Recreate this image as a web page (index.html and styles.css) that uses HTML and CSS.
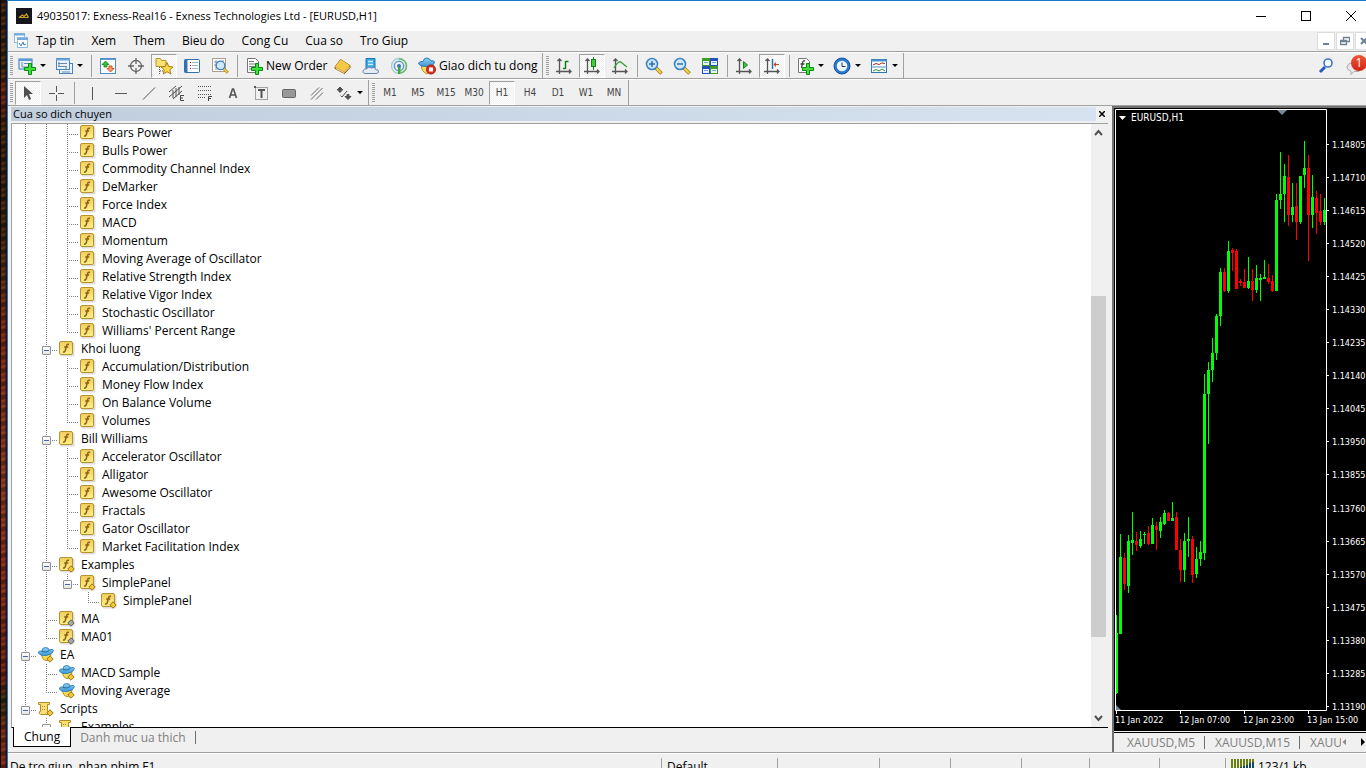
FILE: index.html
```html
<!DOCTYPE html>
<html lang="vi">
<head>
<meta charset="utf-8">
<title>49035017: Exness-Real16 - Exness Technologies Ltd - [EURUSD,H1]</title>
<link rel="stylesheet" href="styles.css">
</head>
<body>
<svg class="defs" aria-hidden="true">
  <defs>
    <linearGradient id="gold" x1="0" y1="0" x2="0" y2="1"><stop offset="0" stop-color="#f0cc5c"/><stop offset="1" stop-color="#fff08a"/></linearGradient>
    <linearGradient id="blue" x1="0" y1="0" x2="0" y2="1"><stop offset="0" stop-color="#8fd0f2"/><stop offset="1" stop-color="#3f96d4"/></linearGradient>
    <symbol id="plus" viewBox="0 0 12 12"><path d="M4.500.5h3v4h4v3h-4v4h-3v-4h-4v-3h4z" fill="#3fe03a" stroke="#0d8a12"/></symbol>
    <symbol id="diamond" viewBox="0 0 8 8"><path d="M4 .8 7.200 4 4 7.200.8 4z"/></symbol>
    <symbol id="fn" viewBox="0 0 16 16">
      <rect x="1.500" y="1.500" width="14" height="14" rx="1.500" fill="#ddd"/>
      <rect x=".5" y=".5" width="13" height="13" rx="1.500" fill="url(#gold)" stroke="#b8922c"/>
      <path d="M10 3.500Q8 2.500 7.500 5L6.300 9.500Q5.800 11.500 4 10.800M5.200 6h4" fill="none" stroke="#8a6414" stroke-width="1.500"/>
    </symbol>
    <symbol id="fny" viewBox="0 0 16 16"><use href="#fn" width="16" height="16"/><use href="#diamond" x="8" y="8" width="8" height="8" fill="#f1c638" stroke="#9a7413"/></symbol>
    <symbol id="fng" viewBox="0 0 16 16"><use href="#fn" width="16" height="16"/><use href="#diamond" x="8" y="8" width="8" height="8" fill="#a8a8a8" stroke="#606060"/></symbol>
    <symbol id="ea" viewBox="0 0 16 16">
      <path d="M3.500 7Q4 13 8 13.500T13 7z" fill="#f7dc5c" stroke="#b98d1c"/>
      <path d="M.5 6Q0 3.500 4 4Q4 .5 7.500.5T11 3Q15 1.500 15.500 3.500Q15 7 8.500 8.500Q2 9 .5 6z" fill="url(#blue)" stroke="#1f77ae" stroke-width=".8"/>
      <path d="M4 4.500Q8 6 11.500 3.500" fill="none" stroke="#1b6b9f"/>
      <use href="#diamond" x="8" y="8" width="8" height="8" fill="#f1c638" stroke="#9a7413"/>
    </symbol>
    <symbol id="script" viewBox="0 0 16 16">
      <path d="M.5 1.500h11v2h-2v7h2v3H2.500Q.5 13 1.500 10.500h1v-7h-2z" fill="#f8df76" stroke="#b18b28"/>
      <path d="M4 5.500h4M4 8.500h4" stroke="#b18b28" stroke-dasharray="1 1"/>
      <use href="#diamond" x="8" y="8" width="8" height="8" fill="#f1c638" stroke="#9a7413"/>
    </symbol>
    <symbol id="axes" viewBox="0 0 18 18"><path d="M4.500 2v15M1 14.500h15M2.500 4l2-2 2 2M14 12.500l2 2-2 2" fill="none" stroke="#555" stroke-width="1.300"/></symbol>
    <symbol id="lens" viewBox="0 0 18 18"><path d="M11 11l5.500 5.500" stroke="#a3780e" stroke-width="3.500"/><path d="M11 11l5 5" stroke="#f6d64b" stroke-width="2"/><circle cx="7" cy="7" r="5.500" fill="#cfe9fb" stroke="#3f83c3" stroke-width="1.600"/></symbol>
  </defs>
</svg>

<div class="desktop">
<div class="wallpaper"></div>
<main class="window">
  <header class="titlebar">
    <svg class="appicon" viewBox="0 0 16 16"><rect width="16" height="16" fill="#15171c"/><path d="M3 9.500 6.500 7 8 8.500 10.500 6l2 3.500M3 9.500h9.500" fill="none" stroke="#c9a21f" stroke-width="1.200"/></svg>
    <h1>49035017: Exness-Real16 - Exness Technologies Ltd - [EURUSD,H1]</h1>
    <div class="winbtns">
      <button aria-label="Minimize"><svg viewBox="0 0 10 10"><path d="M0 5.500h10" stroke="#000"/></svg></button>
      <button aria-label="Maximize"><svg viewBox="0 0 10 10"><rect x=".5" y=".5" width="9" height="9" fill="none" stroke="#000"/></svg></button>
      <button aria-label="Close"><svg viewBox="0 0 10 10"><path d="M0 0l10 10M10 0 0 10" stroke="#000"/></svg></button>
    </div>
  </header>

  <nav class="menubar">
    <svg class="menuicon" viewBox="0 0 16 16"><g fill="#fff" stroke="#8dbbe6"><rect x="1.500" y=".5" width="10" height="9"/><rect x="4.500" y="4.500" width="10" height="10"/></g><path d="M1 1.500h11M4 6h11" stroke="#74abdf" stroke-width="2"/><path d="M6 10l2 3 2-4 1 3 2-1" fill="none" stroke="#3b7fc0"/></svg>
    <button>Tap tin</button><button>Xem</button><button>Them</button><button>Bieu do</button><button>Cong Cu</button><button>Cua so</button><button>Tro Giup</button>
    <div class="mdi">
      <button aria-label="Minimize chart"><svg viewBox="0 0 10 10"><path d="M2 8h6" stroke="#6f7f94" stroke-width="2"/></svg></button>
      <button aria-label="Restore chart"><svg viewBox="0 0 10 10"><path d="M3.500 4V1.500h6v4H7M.5 4.500h6v4h-6zM.5 5.500h6" fill="none" stroke="#6f7f94" stroke-width="1.300"/></svg></button>
      <button aria-label="Close chart"><svg viewBox="0 0 10 10"><path d="M2 2l6 6M8 2 2 8" stroke="#6f7f94" stroke-width="2"/></svg></button>
    </div>
  </nav>

  <div class="toolbar">
    <div class="group">
      <button class="drop" aria-label="New chart"><svg viewBox="0 0 18 18"><rect x="1" y="2" width="13" height="10" fill="#e9f3fd" stroke="#2f76b8"/><path d="M1 3h13" stroke="#5b9bd5" stroke-width="2"/><path d="M4 5v5h7M6 6.500h5" fill="none" stroke="#6c8aa8"/><use href="#plus" x="6" y="6" width="12" height="12"/></svg></button>
      <button class="drop" aria-label="Profiles"><svg viewBox="0 0 18 18"><g fill="#eaf3fc" stroke="#4b82b8"><rect x="4.500" y="6.500" width="13" height="10"/><rect x="1.500" y="1.500" width="13" height="11"/></g><path d="M1 2.500h14" stroke="#6ba6dc" stroke-width="2"/><path d="M4 5v5M3 6.500h9M3 9.500h9M11 9v3M7 15h8" stroke="#6c8aa8"/></svg></button>
      <i class="sep"></i>
      <button aria-label="Market watch"><svg viewBox="0 0 18 18"><rect x="1.500" y="1.500" width="15" height="15" fill="#fff" stroke="#4d8fca"/><path d="M2 2.500h14" stroke="#5b9bd5"/><path d="M6.500 4 10 7.500H8V10H5V7.500H3z" fill="#36c234" stroke="#11820f" stroke-width=".8"/><path d="M11.500 15 8 11.500h2V9h3v2.500h2z" fill="#ff9b6d" stroke="#c8350d" stroke-width=".8"/></svg></button>
      <button aria-label="Data window"><svg viewBox="0 0 18 18"><g fill="none" stroke="#666" stroke-width="1.300"><circle cx="9" cy="9" r="5.500"/><path d="M9 1v6M9 11v6M1 9h6M11 9h6"/></g></svg></button>
      <button class="on" aria-label="Navigator"><svg viewBox="0 0 18 18"><path d="M1 2V9.500h10V3.500H6.500L5.500 1.500H1z" fill="#f8e276" stroke="#b6942a"/><path d="M4.500 10v7M5 14h4" stroke="#555" stroke-dasharray="1 1"/><path d="M12 5.500 13.700 9.500 18 10l-3.200 2.700 1 4.300L12 14.700 8.300 17l1-4.300L6 10l4.300-.5z" fill="#ffdc46" stroke="#a97c12"/></svg></button>
      <button aria-label="Terminal"><svg viewBox="0 0 18 18"><rect x="1.500" y="2.500" width="15" height="13" rx="1" fill="#fff" stroke="#2c6fb2"/><path d="M3 2.500v13" stroke="#2f72b5" stroke-width="3"/><path d="M7 5.500h1M7 8.500h1M7 11.500h1" stroke="#c00"/><path d="M9 5.500h6M9 8.500h6M9 11.500h6" stroke="#9cb5cc"/></svg></button>
      <button aria-label="Strategy tester"><svg viewBox="0 0 18 18"><rect x="1.500" y="1.500" width="13" height="13" fill="#fff" stroke="#a9a08e"/><path d="M3 5h9M3 8h9M5 3v10M12 3v3" stroke="#8a9aaa"/><use href="#lens" x="4" y="3" width="14" height="14"/></svg></button>
      <i class="sep"></i>
      <button class="labelled order"><svg viewBox="0 0 18 18"><path d="M1.500 1.500h8l3 3v11h-11z" fill="#fff" stroke="#777"/><path d="M3 4.500h5M3 7h7M3 9.500h7M3 12h3" stroke="#777"/><use href="#plus" x="5" y="6" width="12" height="12"/></svg><span>New Order</span></button>
      <button aria-label="MetaEditor"><svg viewBox="0 0 18 18"><path d="M1 10 6.500 2.500 16 8.500v2L10.500 16.500 1 11.500z" fill="#b27911" stroke="#8c5c09"/><path d="M1 10 6.500 2.500 16 8.500 10 14.500z" fill="#f4c948"/><path d="M2 11.500l8 4L15.500 10" fill="none" stroke="#fff0b0"/></svg></button>
      <button aria-label="Virtual hosting"><svg viewBox="0 0 18 18"><path d="M4 1.500h9v10H4z" fill="#37a5e8" stroke="#1b76b8"/><path d="M6 4.500h5M6 7.500h5" stroke="#d5f1ff" stroke-width="1.500"/><path d="M3 16.500Q0 16 1.500 13Q2.500 11.500 4.500 12Q6 8.500 9.500 11Q13 9.500 13.500 12.500Q17 12.500 16.500 15Q16 16.500 14 16.500z" fill="#e3ecf6" stroke="#6785a6"/></svg></button>
      <button aria-label="Signals"><svg viewBox="0 0 18 18"><g fill="none"><circle cx="9" cy="9" r="7.500" stroke="#a6cbd9" stroke-width="1.300"/><circle cx="9" cy="9" r="4.700" stroke="#5d9fca" stroke-width="1.500"/><path d="M9 2a7 7 0 0 1 1 14V9" stroke="#6dbb6b" stroke-width="1.500"/></g><circle cx="9" cy="9" r="2" fill="#3975bd"/><path d="M9 10v7" stroke="#3ea73b" stroke-width="2"/></svg></button>
      <button class="labelled auto"><svg viewBox="0 0 18 18"><path d="M3.500 9Q3 14 9 17L16 8z" fill="#f9dc5b" stroke="#b98d1c"/><path d="M.5 6Q2 4 5 4.500Q6 .5 9 1T13 4Q16 3 16.500 5Q16 9 9 9.500Q1 9.500.5 6z" fill="url(#blue)" stroke="#2b7fb3"/><circle cx="13" cy="12.500" r="4.500" fill="#e0301e" stroke="#a8180c"/><rect x="11" y="10.500" width="4" height="4" fill="#fff"/></svg><span>Giao dich tu dong</span></button>
    </div>
    <div class="group">
      <button aria-label="Bar chart"><svg viewBox="0 0 18 18"><use href="#axes" width="18" height="18"/><path d="M10.500 4v8M10.500 4.500h3M8 11.500h2.500" fill="none" stroke="#15801c" stroke-width="1.500"/></svg></button>
      <button class="on" aria-label="Candlesticks"><svg viewBox="0 0 18 18"><use href="#axes" width="18" height="18"/><path d="M10.500 0v13" stroke="#15801c"/><rect x="8.500" y="2.500" width="4" height="7" fill="#3bd33d" stroke="#15801c"/></svg></button>
      <button aria-label="Line chart"><svg viewBox="0 0 18 18"><use href="#axes" width="18" height="18"/><path d="M3 11Q8 2 11 6L16 10" fill="none" stroke="#34a038" stroke-width="1.300"/></svg></button>
      <i class="sep"></i>
      <button aria-label="Zoom in"><svg viewBox="0 0 18 18"><use href="#lens" width="18" height="18"/><path d="M4 7h6M7 4v6" stroke="#2e6fb3" stroke-width="1.500"/></svg></button>
      <button aria-label="Zoom out"><svg viewBox="0 0 18 18"><use href="#lens" width="18" height="18"/><path d="M4 7h6" stroke="#2e6fb3" stroke-width="1.500"/></svg></button>
      <button aria-label="Tile windows"><svg viewBox="0 0 18 18"><path d="M1 1h8v8H1z" fill="#3f9b22"/><path d="M9 1h8v8H9z" fill="#2351b9"/><path d="M1 9h8v8H1z" fill="#2351b9"/><path d="M9 9h8v8H9z" fill="#3f9b22"/><path d="M2 4h6v4H2zM10 4h6v4h-6zM2 12h6v4H2zM10 12h6v4h-6z" fill="#e8f2ff"/><path d="M3 5.500h4M11 5.500h4M3 13.500h4M11 13.500h4" stroke="#7ba3d8"/></svg></button>
      <i class="sep"></i>
      <button aria-label="Auto scroll"><svg viewBox="0 0 18 18"><use href="#axes" width="18" height="18"/><path d="M8.500 4.500v7l4-3.500z" fill="#37c637" stroke="#15801c"/></svg></button>
      <button class="on" aria-label="Chart shift"><svg viewBox="0 0 18 18"><use href="#axes" width="18" height="18"/><path d="M9.500 2v10" stroke="#2b6da8" stroke-width="1.500"/><path d="M10.500 7.500 13 5V7h3v1h-3v2z" fill="#c8441b"/></svg></button>
      <i class="sep"></i>
      <button class="drop" aria-label="Indicators"><svg viewBox="0 0 18 18"><path d="M2.500 1.500h8l3 3v11h-11z" fill="#fff" stroke="#777"/><path d="M9 4Q7 3 6.500 6L5.500 11M4.500 7h4" fill="none" stroke="#444" stroke-width="1.300"/><use href="#plus" x="6" y="6" width="12" height="12"/></svg></button>
      <button class="drop" aria-label="Periods"><svg viewBox="0 0 18 18"><circle cx="9" cy="9" r="8" fill="#2879d0" stroke="#1153a0"/><circle cx="9" cy="9" r="5.300" fill="#e9f5ff"/><path d="M9 5.500V9.500h3.500" fill="none" stroke="#333"/></svg></button>
      <button class="drop" aria-label="Templates"><svg viewBox="0 0 18 18"><rect x="1.500" y="2.500" width="15" height="13" fill="#fff" stroke="#2f76b8"/><path d="M1 3.500h16" stroke="#4b90d0" stroke-width="2"/><path d="M1 10h16" stroke="#4b90d0"/><path d="M3 8l3-1.500 3 1 3-1.500 3 .5" fill="none" stroke="#a02c16"/><path d="M3 14l3-1.500 3 1.500 3-2 3 2" fill="none" stroke="#2a9430"/></svg></button>
    </div>
    <div class="tools">
      <button aria-label="Search"><svg viewBox="0 0 18 18"><path d="M3 15l5-5" stroke="#2559bd" stroke-width="3"/><circle cx="11" cy="6" r="4" fill="#fff" stroke="#3b75d4" stroke-width="1.600"/></svg></button>
      <button class="chat" aria-label="Messages"><svg viewBox="0 0 18 18"><path d="M7 5.500h7v9H9l-3 3v-3Q2 13 2 10T7 5.500z" fill="#e8e8ec" stroke="#aaa"/></svg><b class="badge">1</b></button>
    </div>
  </div>

  <div class="toolbar">
    <div class="group">
      <button class="on" aria-label="Cursor"><svg viewBox="0 0 18 18"><path d="M5 2v12l3-3 2 5 2-1-2-5h4z" fill="#505050"/></svg></button>
      <button aria-label="Crosshair"><svg viewBox="0 0 18 18"><path d="M9.500 2v6M9.500 11v6M2 9.500h6M11 9.500h6" stroke="#555"/></svg></button>
      <i class="sep wide"></i>
      <button aria-label="Vertical line"><svg viewBox="0 0 18 18"><path d="M8.500 3v13" stroke="#555"/></svg></button>
      <button aria-label="Horizontal line"><svg viewBox="0 0 18 18"><path d="M3 9.500h12" stroke="#555"/></svg></button>
      <button aria-label="Trend line"><svg viewBox="0 0 18 18"><path d="M3 15.500 15 3.500" stroke="#555"/></svg></button>
      <button aria-label="Equidistant channel"><svg viewBox="0 0 18 18"><path d="M1 13 14 2M1 8 8 2M5 15 14 7M5 6v8M8 4v9M11 3v8" stroke="#505050"/><path d="M16 11.500h-3.500v5H16M12.500 14H15" fill="none" stroke="#444"/></svg></button>
      <button aria-label="Fibonacci"><svg viewBox="0 0 18 18"><path d="M2 2.500h14M2 6.500h14M2 10.500h14M2 13.500h8" stroke="#555" stroke-dasharray="1 1"/><path d="M16 12.500h-3.500V17M12.500 14.500H15" fill="none" stroke="#444"/></svg></button>
      <button aria-label="Text"><svg viewBox="0 0 18 18"><path d="M5.500 14 8.500 5h1l3 9M6.500 11h5" fill="none" stroke="#555" stroke-width="1.600"/></svg></button>
      <button aria-label="Text label"><svg viewBox="0 0 18 18"><rect x="3.500" y="3.500" width="12" height="12" fill="none" stroke="#555" stroke-dasharray="1 1"/><path d="M6 6h7M9.500 6v8" stroke="#555" stroke-width="2"/><path d="M2 2h2v2H2z" fill="#555"/></svg></button>
      <button aria-label="Rectangle"><svg viewBox="0 0 18 18"><rect x="2.500" y="5.500" width="13" height="8" rx="1" fill="#989898" stroke="#666"/></svg></button>
      <button aria-label="Channels"><svg viewBox="0 0 18 18"><path d="M3 11.500 11 3.500M3 15.500 14.500 4M8 15.500l7-7" stroke="#666"/></svg></button>
      <button class="drop" aria-label="Arrows"><svg viewBox="0 0 18 18"><path d="M5 3l3 3H6v2H4V6H2zM13 15.500 10 12.500h2v-2h2v2h2z" fill="#505050" stroke="#505050"/><path d="M5.500 11.500 7 13l5-6" fill="none" stroke="#505050"/></svg></button>
    </div>
    <div class="group frames">
      <button>M1</button><button>M5</button><button>M15</button><button>M30</button><button class="on">H1</button><button>H4</button><button>D1</button><button>W1</button><button>MN</button>
    </div>
  </div>

  <div class="work">
    <section class="navigator">
      <header class="caption"><h2>Cua so dich chuyen</h2><button aria-label="Close panel"><svg viewBox="0 0 6 6"><path d="M0 0l6 6M6 0 0 6" stroke="#000" stroke-width="1.500"/></svg></button></header>
      <div class="pane">
        <ul class="tree">
          <li><ul>
            <li><ul>
              <li><p><svg><use href="#fn"/></svg>Bears Power</p></li>
              <li><p><svg><use href="#fn"/></svg>Bulls Power</p></li>
              <li><p><svg><use href="#fn"/></svg>Commodity Channel Index</p></li>
              <li><p><svg><use href="#fn"/></svg>DeMarker</p></li>
              <li><p><svg><use href="#fn"/></svg>Force Index</p></li>
              <li><p><svg><use href="#fn"/></svg>MACD</p></li>
              <li><p><svg><use href="#fn"/></svg>Momentum</p></li>
              <li><p><svg><use href="#fn"/></svg>Moving Average of Oscillator</p></li>
              <li><p><svg><use href="#fn"/></svg>Relative Strength Index</p></li>
              <li><p><svg><use href="#fn"/></svg>Relative Vigor Index</p></li>
              <li><p><svg><use href="#fn"/></svg>Stochastic Oscillator</p></li>
              <li><p><svg><use href="#fn"/></svg>Williams' Percent Range</p></li>
            </ul></li>
            <li><p class="open"><svg><use href="#fn"/></svg>Khoi luong</p><ul>
              <li><p><svg><use href="#fn"/></svg>Accumulation/Distribution</p></li>
              <li><p><svg><use href="#fn"/></svg>Money Flow Index</p></li>
              <li><p><svg><use href="#fn"/></svg>On Balance Volume</p></li>
              <li><p><svg><use href="#fn"/></svg>Volumes</p></li>
            </ul></li>
            <li><p class="open"><svg><use href="#fn"/></svg>Bill Williams</p><ul>
              <li><p><svg><use href="#fn"/></svg>Accelerator Oscillator</p></li>
              <li><p><svg><use href="#fn"/></svg>Alligator</p></li>
              <li><p><svg><use href="#fn"/></svg>Awesome Oscillator</p></li>
              <li><p><svg><use href="#fn"/></svg>Fractals</p></li>
              <li><p><svg><use href="#fn"/></svg>Gator Oscillator</p></li>
              <li><p><svg><use href="#fn"/></svg>Market Facilitation Index</p></li>
            </ul></li>
            <li><p class="open"><svg><use href="#fny"/></svg>Examples</p><ul>
              <li><p class="open"><svg><use href="#fny"/></svg>SimplePanel</p><ul>
                <li><p><svg><use href="#fny"/></svg>SimplePanel</p></li>
              </ul></li>
            </ul></li>
            <li><p><svg><use href="#fng"/></svg>MA</p></li>
            <li><p><svg><use href="#fng"/></svg>MA01</p></li>
          </ul></li>
          <li><p class="open"><svg><use href="#ea"/></svg>EA</p><ul>
            <li><p><svg><use href="#ea"/></svg>MACD Sample</p></li>
            <li><p><svg><use href="#ea"/></svg>Moving Average</p></li>
          </ul></li>
          <li><p class="open"><svg><use href="#script"/></svg>Scripts</p><ul>
            <li><p class="open"><svg><use href="#script"/></svg>Examples</p></li>
          </ul></li>
        </ul>
        <div class="scrollbar">
          <svg viewBox="0 0 15 18"><path d="M4 11l3.500-4 3.500 4" fill="none" stroke="#505050" stroke-width="2"/></svg>
          <div class="track"><div class="thumb"></div></div>
          <svg viewBox="0 0 15 18"><path d="M4 7l3.500 4L11 7" fill="none" stroke="#505050" stroke-width="2"/></svg>
        </div>
      </div>
      <div class="tabs"><button class="active">Chung</button><button>Danh muc ua thich</button></div>
    </section>

    <section class="charts">
      <svg class="chart" viewBox="0 0 252 622" preserveAspectRatio="xMinYMin meet" role="img" aria-label="EURUSD H1">
        <g id="candles" shape-rendering="crispEdges"></g>
        <path d="M1.500 1.500h211v601H1.500z" fill="none" stroke="#fff"/>
        <path d="M163 2h10l-5 5z" fill="#778899"/><path d="M2 597v5h5z" fill="#778899"/>
        <path d="M5 8h7l-3.500 4z" fill="#fff"/>
        <text class="symbol" x="17" y="13">EURUSD,H1</text>
        <g id="axis"></g>
      </svg>
      <div class="charttabs">
        <button>XAUUSD,M5</button><button>XAUUSD,M15</button><button class="cut">XAUUSD,M30</button>
        <span class="arrows"><svg viewBox="0 0 24 8"><path d="M5 1v6L1.500 4z" fill="#888"/><path d="M20 0v8l4-4z" fill="#000"/></svg></span>
      </div>
    </section>
  </div>

  <footer class="status">
    <span class="hint">De tro giup, nhan phim F1</span><span class="w116">Default</span><span class="w102"></span><span class="w71"></span><span class="w71"></span><span class="w68"></span><span class="w70"></span><span class="w66"></span>
    <span class="net"><svg viewBox="0 0 23 14"><path d="M1 0v10M4 0v10M7 0v9M10 0v8M13 0v7M16 0v6M19 0v4M22 0v3" stroke="#6b7f10" stroke-width="2"/><path d="M1 11v3M4 10v4M7 9v5M10 8v6M13 7v7M16 6v8M19 4v10M22 3v11" stroke="#164a63" stroke-width="2"/></svg>123/1 kb</span>
  </footer>
</main>
</div>
<script src="chart.js"></script>
</body>
</html>
```
FILE: styles.css
```css
*, *::before { box-sizing: border-box; }
body { margin: 0; font: 12px/18px "Open Sans", "Noto Sans", sans-serif; color: #000; overflow: hidden; }
button { font: inherit; color: inherit; background: none; border: 0; padding: 0; margin: 0; }
h1, h2, p, ul { margin: 0; padding: 0; font: inherit; list-style: none; }
.defs { position: absolute; width: 0; height: 0; }
.desktop { display: flex; height: 100vh; }
.wallpaper {
  flex: none; width: 7px;
  background:
    linear-gradient(to right, #0c0606 0 1px, transparent 1px 5px, #1c0d08cc 6px),
    repeating-linear-gradient(170deg, #0005 0 3px, #c0501c44 5px, #0003 8px, #e0803033 11px, #0004 13px),
    linear-gradient(#2b1c0e 0, #30220f 70px, #6b1d12 90px, #2c1d0d 130px, #30200e 230px, #4a2c10 270px, #7c2412 330px, #8b3a18 480px, #8c2a16 560px, #6c1f12 680px, #1e2a12 700px, #752814 730px, #812615);
}
.window { flex: 1; min-width: 0; display: flex; flex-direction: column; background: #f0f0f0; border-top: 1px solid #1979ca; border-left: 1px solid #1979ca; }

.titlebar { flex: none; display: flex; align-items: center; height: 30px; padding-left: 8px; background: #fff; }
.titlebar h1 { font-size: 11px; }
.appicon { width: 16px; height: 16px; margin-right: 5px; }
.winbtns { margin-left: auto; display: flex; }
.winbtns button { width: 45px; height: 28px; display: flex; align-items: center; justify-content: center; }
.winbtns button:last-child { width: 46px; }
.winbtns svg { width: 10px; height: 10px; }
.winbtns { margin-right: -8px; }

.menubar { flex: none; display: flex; align-items: center; height: 21px; padding-left: 5px; border-bottom: 1px solid #a0a0a0; }
.menuicon { width: 16px; height: 16px; margin-right: 7px; }
.menubar > button { margin-right: 17px; }
.mdi { display: flex; gap: 1px; margin-left: auto; margin-right: -7px; }
.menubar .mdi button { width: 18px; height: 18px; background: #fff; border: 1px solid #ddd; display: flex; align-items: center; justify-content: center; }
.mdi svg { width: 10px; height: 10px; }

.toolbar { flex: none; display: flex; height: 27px; border-top: 1px solid #fff; border-bottom: 1px solid #a0a0a0; }
.group { display: flex; align-items: center; border-right: 1px solid #a0a0a0; padding-left: 2px; }
.group::before { content: ""; width: 3px; height: 20px; margin-right: 1px; background: repeating-linear-gradient(#a0a0a0 0 1px, transparent 1px 2px); }
.group + .group { padding-left: 3px; }
.toolbar button { width: 28px; height: 24px; display: flex; align-items: center; justify-content: center; border: 1px solid transparent; }
.toolbar button svg { width: 18px; height: 18px; flex: none; }
.toolbar .on { width: 26px; margin: 0 1px; background: repeating-conic-gradient(#f0f0f0 0 25%, #fff 0 50%) 0 0 / 2px 2px; border-color: #a0a0a0 #fff #fff #a0a0a0; }
.toolbar .drop { width: 37px; padding-left: 3px; justify-content: flex-start; gap: 4px; }
.drop::after { content: ""; border: 3px solid transparent; border-top-color: #000; border-bottom: 0; }
.sep { width: 1px; height: 22px; margin: 0 2px 0 3px; background: #a0a0a0; }
.sep.wide { margin: 0 4px; }
.toolbar .labelled { justify-content: flex-start; padding-left: 5px; gap: 2px; white-space: nowrap; }
.toolbar .order { width: 89px; }
.toolbar .auto { width: 129px; padding-left: 4px; gap: 3px; }
.frames button { font: 10px/14px "DejaVu Sans Condensed", "Noto Sans", sans-serif; color: #444; }
.tools { margin-left: auto; display: flex; align-items: center; }
.tools .chat { position: relative; }
.badge { position: absolute; right: 0; top: 0; width: 16px; height: 16px; border-radius: 8px; background: linear-gradient(#f2563b, #cf2412); color: #fff; font: 12px/16px "Open Sans", sans-serif; }
.toolbar .tools { margin-right: -2px; }

.work { flex: 1; min-height: 0; display: flex; border-bottom: 1px solid #a0a0a0; margin-bottom: 1px; }
.navigator { flex: 1; min-width: 0; display: flex; flex-direction: column; padding: 1px 4px 3px 3px; }
.caption { flex: none; display: flex; align-items: center; height: 15px; padding-left: 2px; background: linear-gradient(to right, #bfcddd, #d7e3f0); border-bottom: 1px solid #f0f0f0; margin-bottom: 1px; }
.caption h2 { font-size: 11px; line-height: 14px; }
.caption button { width: 12px; height: 14px; margin-left: auto; background: #f0f0f0; display: flex; align-items: center; justify-content: center; }
.caption svg { width: 6px; height: 6px; }
.pane { flex: 1; min-height: 0; display: flex; background: #fff; border: 1px solid #a0a0a0; border-width: 1px 0 0 1px; border-bottom: 1px solid #000; }
.tree { flex: 1; overflow: hidden; }
.tree ul { margin-left: 21px; }
.tree li { background: repeating-linear-gradient(#808080 0 1px, transparent 1px 2px) 13px 0 / 1px 100% no-repeat; }
.tree ul > li:last-child { background-size: 1px 10px; }
.tree > li:last-child { background-size: 1px 10px; }
.tree p { position: relative; display: flex; align-items: center; gap: 6px; height: 18px; padding-left: 26px; white-space: nowrap; background: repeating-linear-gradient(to right, #808080 0 1px, transparent 1px 2px) 13px 10px / 11px 1px no-repeat; }
.tree svg { width: 16px; height: 16px; flex: none; }
.open::before { content: ""; position: absolute; left: 9px; top: 6px; width: 9px; height: 9px; border: 1px solid #919191; border-radius: 1px; background: linear-gradient(#4b63a7, #4b63a7) center / 5px 1px no-repeat, linear-gradient(#fff, #e4e4e4); }
.scrollbar { flex: none; width: 17px; display: flex; flex-direction: column; background: #f0f0f0; padding-right: 2px; }
.scrollbar svg { flex: none; width: 15px; height: 18px; }
.track { flex: 1; display: flex; flex-direction: column; }
.track::before { content: ""; flex: 154; }
.track::after { content: ""; flex: 72; }
.thumb { flex: 341; background: #cdcdcd; }
.tabs { flex: none; display: flex; height: 21px; padding-left: 2px; color: #808080; }
.tabs button { padding: 0 9px; height: 19px; position: relative; }
.tabs button:last-child { border-right: 1px solid #707070; height: 13px; margin-top: 3px; line-height: 13px; }
.tabs .active { background: #fff; color: #000; border: 1px solid #000; border-top: 0; height: 20px; margin-top: -1px; padding: 0 10px; }

.charts { flex: none; width: 254px; display: flex; flex-direction: column; border-left: 2px solid #707070; }
.chart { flex: 1; min-height: 0; width: 100%; background: #000; border-top: 2px solid #707070; margin-bottom: 1px; }
.chart text { fill: #fff; font: 9px "DejaVu Sans Condensed", "Noto Sans", sans-serif; }
.chart .symbol { font-size: 10px; }
.charttabs { flex: none; display: flex; align-items: center; height: 20px; border-top: 1px solid #000; color: #808080; padding: 0 0 1px 3px; }
.charttabs button { height: 13px; line-height: 13px; padding: 0 9px 0 10px; border-right: 1px solid #707070; }
.charttabs .cut { width: 42px; padding-right: 0; overflow: hidden; border: 0; text-align: left; white-space: nowrap; }
.arrows { margin-left: auto; padding-right: 1px; display: flex; }
.arrows svg { width: 24px; height: 8px; }

.status { flex: none; display: flex; height: 15px; padding-top: 4px; overflow: hidden; border-top: 1px solid #fff; margin-top: -1px; }
.status span { flex: none; height: 20px; padding: 0 5px; border-left: 1px solid #a0a0a0; white-space: nowrap; }
.status .hint { flex: 1; padding-left: 2px; border: 0; }
.w116 { width: 116px; } .w102 { width: 102px; } .w71 { width: 71px; } .w68 { width: 68px; } .w70 { width: 70px; } .w66 { width: 66px; }
.status .net { width: 141px; display: flex; gap: 4px; }
.net svg { width: 23px; height: 14px; margin-top: 1px; }
```
FILE: chart.js
```js
// Each candle: high, low, body top, body bottom, rising (1) or falling (0).
const candles = [
  [507,586,525,585,1],[426,526,449,526,1],[445,482,450,476,0],[427,485,433,478,1],[404,447,432,435,1],
  [424,443,433,437,0],[423,440,431,438,1],[424,436,426,427,1],[418,437,425,436,0],[410,436,417,436,1],
  [414,442,418,422,0],[409,430,414,423,1],[402,417,405,416,1],[404,413,405,413,0],[394,413,410,413,1],
  [404,442,409,442,0],[431,474,442,462,0],[425,474,433,462,1],[409,449,431,433,1],[428,475,431,467,0],
  [439,470,451,466,1],[433,458,444,451,1],[266,452,286,445,1],[254,336,262,286,1],[230,274,245,262,1],
  [206,252,208,245,1],[160,218,164,208,1],[160,184,164,183,0],[133,185,143,183,1],[140,163,142,145,0],
  [141,181,143,181,0],[171,178,173,175,0],[161,180,174,180,0],[149,181,173,180,1],[161,193,173,182,0],
  [157,185,170,182,1],[166,193,170,172,1],[152,171,169,171,1],[156,176,170,174,0],[167,184,173,183,0],
  [86,183,92,183,1],[44,101,86,92,1],[56,114,68,86,1],[47,118,69,107,0],[75,114,99,107,1],
  [75,132,98,114,0],[68,116,68,114,1],[33,80,60,67,1],[47,153,60,107,0],[67,120,89,107,1],
  [83,126,90,105,0],[86,117,103,114,0],[90,117,102,114,1]
];
const NS = "http://www.w3.org/2000/svg";
function add(parent, tag, attrs, text) {
  const el = document.createElementNS(NS, tag);
  for (const key in attrs) el.setAttribute(key, attrs[key]);
  if (text) el.textContent = text;
  parent.appendChild(el);
}
const body = document.getElementById("candles");
candles.forEach(([high, low, top, bottom, up], i) => {
  const x = 2 + i * 4, fill = up ? "#00ff00" : "#ff0000";
  add(body, "rect", { x: x, y: high, width: 1, height: low - high, fill });
  add(body, "rect", { x: x - 1, y: top, width: 3, height: bottom - top, fill });
});
const axis = document.getElementById("axis");
const prices = ["1.14805","1.14710","1.14615","1.14520","1.14425","1.14330","1.14235","1.14140","1.14045","1.13950","1.13855","1.13760","1.13665","1.13570","1.13475","1.13380","1.13285","1.13190"];
prices.forEach((price, i) => {
  const y = 36 + i * 33 + (i > 10 ? 1 : 0);
  add(axis, "rect", { x: 213, y: y, width: 2, height: 1, fill: "#fff" });
  add(axis, "text", { x: 218, y: y + 4 }, price);
});
["11 Jan 2022","12 Jan 07:00","12 Jan 23:00","13 Jan 15:00"].forEach((time, i) => {
  add(axis, "rect", { x: 2 + i * 64, y: 603, width: 1, height: 3, fill: "#fff" });
  add(axis, "text", { x: 1 + i * 64, y: 615 }, time);
});
```
